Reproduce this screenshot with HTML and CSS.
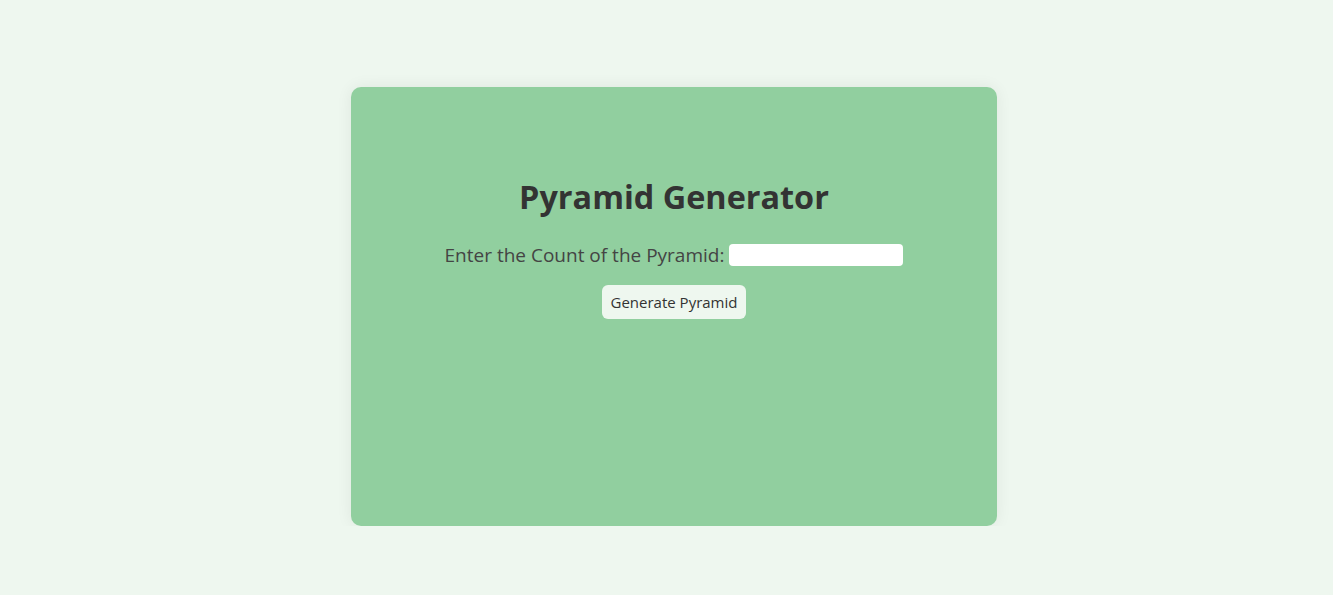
FILE: index.html
```html
<!DOCTYPE html>
<html>
<head>
<meta charset="utf-8">
<link rel="stylesheet" href="styles.css">
</head>
<body>
<main class="page">
  <section class="card">
    <h1 class="title">Pyramid Generator</h1>
    <div class="field">
      <label class="label" for="count">Enter the Count of the Pyramid:</label>
      <input class="input" id="count" type="text">
    </div>
    <button class="btn">Generate Pyramid</button>
  </section>
</main>
</body>
</html>
```
FILE: styles.css
```css
html, body {
  margin: 0;
  padding: 0;
}
body {
  background: #eef7ef;
  font-family: "Open Sans", "Noto Sans", sans-serif;
  color: #333;
}
.page {
  display: flex;
  justify-content: center;
  padding: 87px 0 0 15px;
}
.card {
  width: 646px;
  height: 439px;
  box-sizing: border-box;
  background: #91cf9f;
  border-radius: 10px;
  box-shadow: 0 0 16px rgba(0,0,0,0.07);
  display: flex;
  flex-direction: column;
  align-items: center;
  padding-top: 87px;
}
.title {
  margin: 0;
  font-size: 32.4px;
  font-weight: 700;
  line-height: 44px;
  color: #333;
}
.field {
  display: flex;
  align-items: center;
  margin-top: 24px;
  gap: 5px;
}
.label {
  font-size: 19px;
  color: #444;
}
.input {
  width: 174px;
  height: 22px;
  box-sizing: border-box;
  border: none;
  border-radius: 4px;
  background: #fff;
  padding: 0;
}
.btn {
  margin-top: 17px;
  height: 34px;
  padding: 0 9px;
  border: none;
  border-radius: 6px;
  background: #eef7ef;
  font-family: inherit;
  font-size: 15px;
  color: #333;
}
```
